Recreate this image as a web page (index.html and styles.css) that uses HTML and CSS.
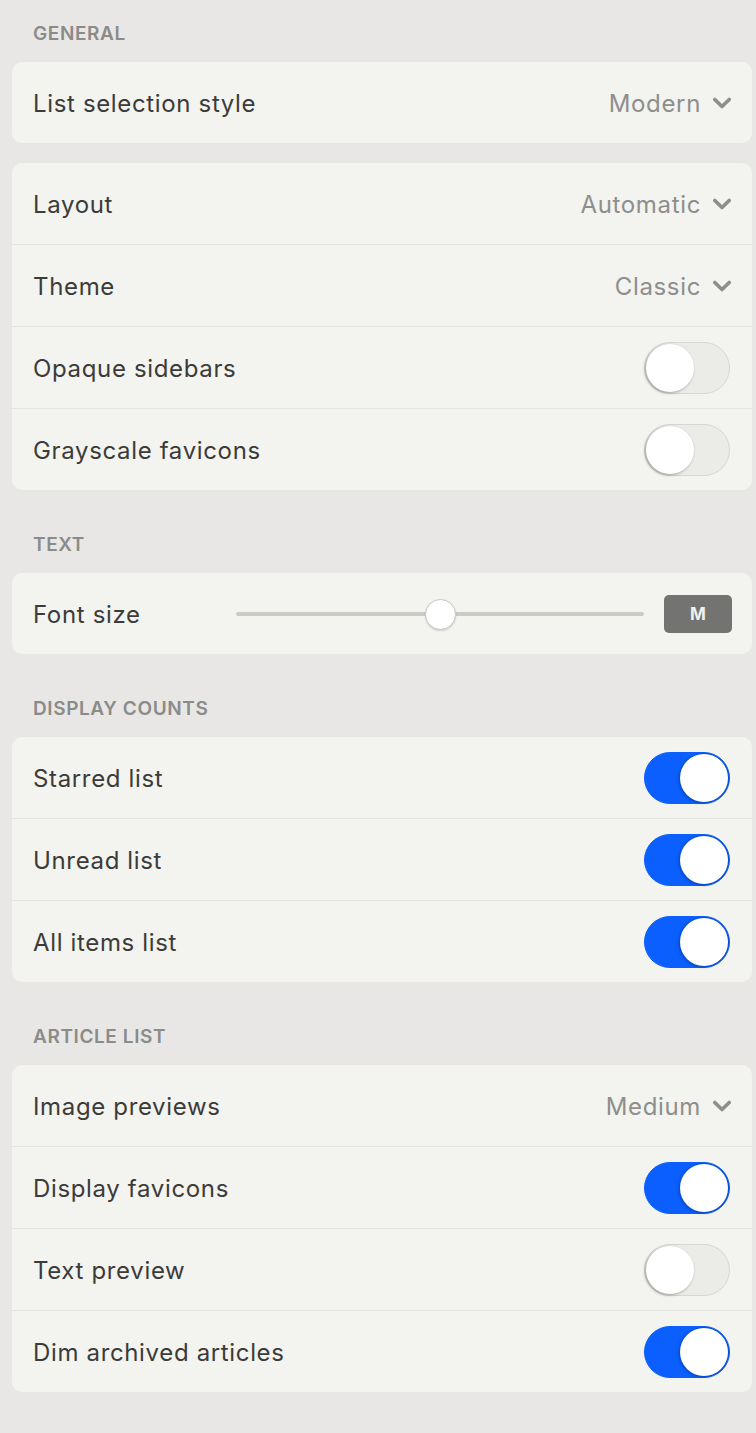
FILE: index.html
```html
<!DOCTYPE html>
<html lang="en">
<head>
<meta charset="utf-8">
<title>Settings</title>
<link rel="stylesheet" href="styles.css">
</head>
<body>
<main class="settings">
  <h2 class="section-title">GENERAL</h2>
  <div class="card">
    <div class="row"><span class="label">List selection style</span><span class="select">Modern<svg class="chev" viewBox="0 0 16 10"><polyline points="2,2 8,8 14,2"/></svg></span></div>
  </div>
  <div class="card card-gap">
    <div class="row"><span class="label">Layout</span><span class="select">Automatic<svg class="chev" viewBox="0 0 16 10"><polyline points="2,2 8,8 14,2"/></svg></span></div>
    <div class="row"><span class="label">Theme</span><span class="select">Classic<svg class="chev" viewBox="0 0 16 10"><polyline points="2,2 8,8 14,2"/></svg></span></div>
    <div class="row"><span class="label">Opaque sidebars</span><span class="toggle"><span class="knob"></span></span></div>
    <div class="row"><span class="label">Grayscale favicons</span><span class="toggle"><span class="knob"></span></span></div>
  </div>

  <h2 class="section-title spaced">TEXT</h2>
  <div class="card">
    <div class="row"><span class="label">Font size</span>
      <div class="slider-wrap">
        <div class="slider"><span class="track"></span><span class="thumb"></span></div>
        <span class="badge">M</span>
      </div>
    </div>
  </div>

  <h2 class="section-title spaced">DISPLAY COUNTS</h2>
  <div class="card">
    <div class="row"><span class="label">Starred list</span><span class="toggle on"><span class="knob"></span></span></div>
    <div class="row"><span class="label">Unread list</span><span class="toggle on"><span class="knob"></span></span></div>
    <div class="row"><span class="label">All items list</span><span class="toggle on"><span class="knob"></span></span></div>
  </div>

  <h2 class="section-title spaced">ARTICLE LIST</h2>
  <div class="card">
    <div class="row"><span class="label">Image previews</span><span class="select">Medium<svg class="chev" viewBox="0 0 16 10"><polyline points="2,2 8,8 14,2"/></svg></span></div>
    <div class="row"><span class="label">Display favicons</span><span class="toggle on"><span class="knob"></span></span></div>
    <div class="row"><span class="label">Text preview</span><span class="toggle"><span class="knob"></span></span></div>
    <div class="row"><span class="label">Dim archived articles</span><span class="toggle on"><span class="knob"></span></span></div>
  </div>
</main>
</body>
</html>
```
FILE: styles.css
```css
* { box-sizing: border-box; }
html, body { margin: 0; padding: 0; }
body {
  background: #e8e7e5;
  font-family: Inter, "Noto Sans", "Liberation Sans", sans-serif;
  color: #3b3b3a;
  width: 756px;
  min-height: 1433px;
}
.settings {
  padding: 23px 4px 40px 12px;
  display: flex;
  flex-direction: column;
}
.section-title {
  margin: 0 0 17px 21px;
  font-size: 19px;
  line-height: 22px;
  font-weight: 600;
  letter-spacing: 0.6px;
  color: #8b8b89;
}
.section-title.spaced { margin-top: 44px; }
.card {
  background: #f3f3ef;
  border-radius: 10px;
  display: flex;
  flex-direction: column;
}
.card-gap { margin-top: 20px; }
.row {
  height: 81px;
  display: flex;
  align-items: center;
  justify-content: space-between;
  padding: 1px 20px 0 21px;
}
.row + .row { border-top: 1px solid #e3e3df; height: 82px; }
.label {
  font-size: 24px;
  letter-spacing: 0.65px;
}
.select {
  display: flex;
  align-items: center;
  gap: 11px;
  font-size: 24px;
  letter-spacing: 0.65px;
  color: #8e8e8c;
}
.chev {
  width: 20px;
  height: 12px;
  fill: none;
  stroke: #8e8e8c;
  stroke-width: 3;
  stroke-linecap: round;
  stroke-linejoin: round;
}
.toggle {
  width: 86px;
  height: 52px;
  border-radius: 26px;
  background: #ebebe8;
  border: 1px solid #d6d6d2;
  display: flex;
  align-items: center;
  padding: 1px;
  margin-right: 2px;
}
.knob {
  width: 48px;
  height: 48px;
  border-radius: 50%;
  background: #fff;
  box-shadow: -1px 1px 3px rgba(0,0,0,0.35);
}
.toggle.on {
  background: #0b5fff;
  border-color: #0b5fff;
  justify-content: flex-end;
}
.toggle.on .knob {
  box-shadow: 0 0 0 1px #0a4fd0, -1px 1px 3px rgba(0,0,0,0.3);
}
.slider-wrap {
  display: flex;
  align-items: center;
  gap: 20px;
}
.slider {
  width: 408px;
  height: 32px;
  display: flex;
  align-items: center;
}
.track {
  width: 100%;
  height: 4px;
  border-radius: 2px;
  background: #cbcbc6;
}
.thumb {
  position: absolute;
  width: 31px;
  height: 31px;
  border-radius: 50%;
  background: #fff;
  border: 1px solid #c8c8c4;
  box-shadow: 0 1px 2px rgba(0,0,0,0.15);
  margin-left: 189px;
}
.badge {
  width: 68px;
  height: 38px;
  border-radius: 5px;
  background: #737372;
  color: #f0f0ee;
  font-weight: 700;
  font-size: 17px;
  display: flex;
  align-items: center;
  justify-content: center;
}
```
